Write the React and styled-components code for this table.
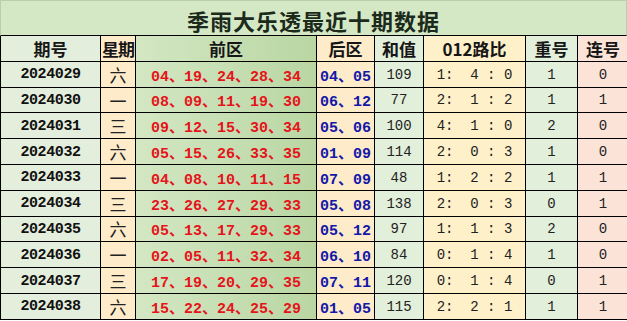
import React from 'react';
import styled, { createGlobalStyle } from 'styled-components';

const GlobalStyle = createGlobalStyle`
  html, body {
    margin: 0;
    padding: 0;
    background: #ffffff;
  }
`;

const COLS = '100px 35px 181px 58px 49px 102px 52px 50px';

const colBg = {
  period: '#e4eedc',
  week: '#fdebc9',
  front: 'linear-gradient(90deg, #d3e7c3 0%, #c4ddb0 60%, #b9d6a2 100%)',
  back: '#fdebc9',
  sum: '#e2efda',
  ratio: '#fef0c9',
  repeat: '#e2efda',
  link: '#fbe4d7',
};

const Board = styled.div`
  width: 627px;
  height: 321px;
  overflow: hidden;
  font-family: 'Noto Sans CJK SC', sans-serif;
  color: #111;
`;

const Title = styled.div`
  height: 36px;
  box-sizing: border-box;
  background: #d5e8c6;
  border: 1px solid #b8d0a8;
  border-bottom: 1px solid #000;
  display: flex;
  align-items: center;
  justify-content: center;
  padding-top: 4px;
  font-size: 22px;
  font-weight: 700;
  color: #1b2a1b;
  letter-spacing: 1px;
`;

const Row = styled.div`
  display: grid;
  grid-template-columns: ${COLS};
  height: 25.8px;
  box-sizing: border-box;
  border-bottom: 1px solid #000;
  border-left: 1px solid #000;
`;

const Cell = styled.div`
  background: ${p => colBg[p.$col]};
  border-right: 1px solid #000;
  display: flex;
  align-items: center;
  justify-content: center;
  overflow: hidden;
  white-space: pre;
  &:last-child {
    border-right: none;
  }
`;

const Head = styled.span`
  font-family: 'Noto Sans CJK SC', sans-serif;
  font-size: 17px;
  font-weight: 700;
  color: #161616;
  letter-spacing: ${p => (p.$tight ? '-1px' : '0')};
  padding-top: 1px;
`;

const Mono = styled.span`
  font-family: 'Liberation Mono', 'Noto Sans CJK SC', monospace;
  font-size: 15px;
  font-weight: 700;
  letter-spacing: -0.4px;
  color: #111;
  padding-top: 1px;
`;

const Week = styled.span`
  font-family: 'Noto Sans CJK SC', sans-serif;
  font-size: 17px;
  font-weight: 400;
  color: #222;
`;

const Balls = styled.span`
  font-family: 'Liberation Mono', 'Noto Sans CJK SC', monospace;
  font-size: 15px;
  font-weight: 700;
  color: ${p => p.$color};
  padding-top: 1px;
`;

const Plain = styled.span`
  font-family: 'Liberation Mono', 'Noto Sans CJK SC', monospace;
  font-size: 14px;
  font-weight: 400;
  color: #222;
  padding-top: 1px;
`;

const data = [
  ['2024029', '六', '04、19、24、28、34', '04、05', '109', '1:  4 : 0', '1', '0'],
  ['2024030', '一', '08、09、11、19、30', '06、12', '77', '2:  1 : 2', '1', '1'],
  ['2024031', '三', '09、12、15、30、34', '05、06', '100', '4:  1 : 0', '2', '0'],
  ['2024032', '六', '05、15、26、33、35', '01、09', '114', '2:  0 : 3', '1', '0'],
  ['2024033', '一', '04、08、10、11、15', '07、09', '48', '1:  2 : 2', '1', '1'],
  ['2024034', '三', '23、26、27、29、33', '05、08', '138', '2:  0 : 3', '0', '1'],
  ['2024035', '六', '05、13、17、29、33', '05、12', '97', '1:  1 : 3', '2', '0'],
  ['2024036', '一', '02、05、11、32、34', '06、10', '84', '0:  1 : 4', '1', '0'],
  ['2024037', '三', '17、19、20、29、35', '07、11', '120', '0:  1 : 4', '0', '1'],
  ['2024038', '六', '15、22、24、25、29', '01、05', '115', '2:  2 : 1', '1', '1'],
];

const App = () => (
  <>
    <GlobalStyle />
    <Board>
      <Title>季雨大乐透最近十期数据</Title>
      <Row>
        <Cell $col="period"><Head>期号</Head></Cell>
        <Cell $col="week"><Head $tight>星期</Head></Cell>
        <Cell $col="front"><Head>前区</Head></Cell>
        <Cell $col="back"><Head>后区</Head></Cell>
        <Cell $col="sum"><Head>和值</Head></Cell>
        <Cell $col="ratio"><Head>012路比</Head></Cell>
        <Cell $col="repeat"><Head>重号</Head></Cell>
        <Cell $col="link"><Head>连号</Head></Cell>
      </Row>
      {data.map(r => (
        <Row key={r[0]}>
          <Cell $col="period"><Mono>{r[0]}</Mono></Cell>
          <Cell $col="week"><Week>{r[1]}</Week></Cell>
          <Cell $col="front"><Balls $color="#e5141b">{r[2]}</Balls></Cell>
          <Cell $col="back"><Balls $color="#1418a8">{r[3]}</Balls></Cell>
          <Cell $col="sum"><Plain>{r[4]}</Plain></Cell>
          <Cell $col="ratio"><Plain>{r[5]}</Plain></Cell>
          <Cell $col="repeat"><Plain>{r[6]}</Plain></Cell>
          <Cell $col="link"><Plain>{r[7]}</Plain></Cell>
        </Row>
      ))}
    </Board>
  </>
);

export default App;
